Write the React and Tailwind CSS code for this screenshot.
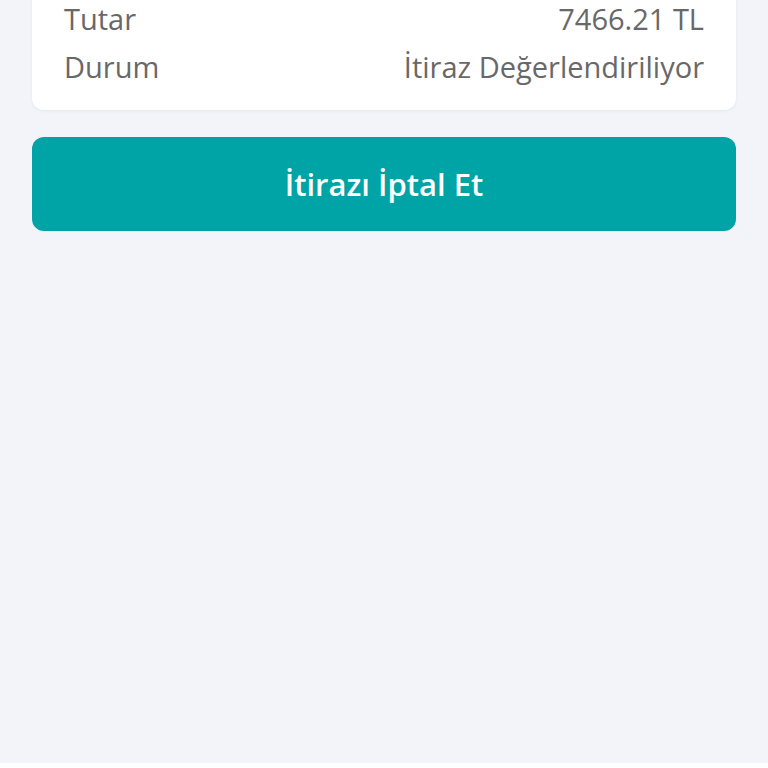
import React from "react";

const rows = [
  { label: "Tutar", value: "7466.21 TL" },
  { label: "Durum", value: "İtiraz Değerlendiriliyor" },
];

export default function App() {
  return (
    <div
      className="min-h-[768px] w-full bg-[#f2f4f9] px-8"
      style={{ fontFamily: '"Open Sans", "Noto Sans", sans-serif' }}
    >
      <div className="-mt-[5px] rounded-b-xl bg-white px-8 pb-[19px] shadow-[0_1px_3px_rgba(0,0,0,0.06)]">
        {rows.map((row) => (
          <div
            key={row.label}
            className="flex items-center justify-between text-[29px] leading-[48px] text-[#686868]"
          >
            <span>{row.label}</span>
            <span>{row.value}</span>
          </div>
        ))}
      </div>

      <button className="mt-[27px] flex h-[94px] w-full items-center justify-center rounded-xl bg-[#00a3a6] text-[31px] font-semibold text-white">
        İtirazı İptal Et
      </button>
    </div>
  );
}
